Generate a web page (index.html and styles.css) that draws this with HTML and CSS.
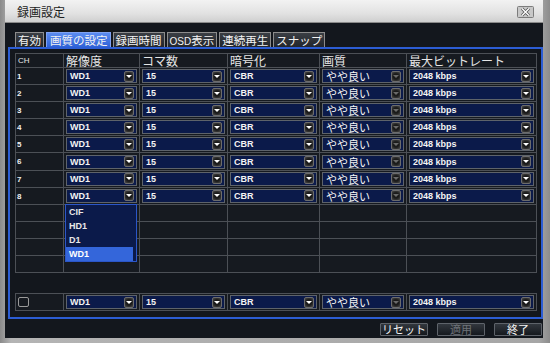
FILE: index.html
```html
<!DOCTYPE html>
<html lang="ja">
<head>
    <meta charset="UTF-8">
    <title>録画設定</title>
    <link rel="stylesheet" href="styles.css">
</head>
<body>
    <div class="window">
        <div class="titlebar">
            <span class="title">録画設定</span>
            <span class="close">
                <svg width="17" height="12" viewBox="0 0 17 12">
                    <rect x="0.5" y="0.5" width="16" height="11" rx="1" fill="#c8c8c8" stroke="#7c7c7c"/>
                    <path d="M5 2.5 L12 9.5 M12 2.5 L5 9.5" stroke="#555" stroke-width="3"/>
                    <path d="M5 2.5 L12 9.5 M12 2.5 L5 9.5" stroke="#fff" stroke-width="1.4"/>
                </svg>
            </span>
        </div>

        <div class="content">
            <div class="tabs">
                <div class="tab">有効</div>
                <div class="tab active">画質の設定</div>
                <div class="tab">録画時間</div>
                <div class="tab"><span class="latin">OSD</span>表示</div>
                <div class="tab">連続再生</div>
                <div class="tab">スナップ</div>
            </div>

            <div class="panel">
                <div class="grid">
                    <div class="row head">
                        <div class="cell"><span class="ch">CH</span></div>
                        <div class="cell">解像度</div>
                        <div class="cell">コマ数</div>
                        <div class="cell">暗号化</div>
                        <div class="cell">画質</div>
                        <div class="cell">最大ビットレート</div>
                    </div>

                    <div class="row">
                        <div class="cell num">1</div>
                        <div class="cell"><div class="sel"><span>WD1</span><i class="arr"></i></div></div>
                        <div class="cell"><div class="sel"><span>15</span><i class="arr"></i></div></div>
                        <div class="cell"><div class="sel"><span>CBR</span><i class="arr"></i></div></div>
                        <div class="cell"><div class="sel jp"><span>やや良い</span><i class="arr dim"></i></div></div>
                        <div class="cell"><div class="sel"><span>2048 kbps</span><i class="arr"></i></div></div>
                    </div>
                    <div class="row">
                        <div class="cell num">2</div>
                        <div class="cell"><div class="sel"><span>WD1</span><i class="arr"></i></div></div>
                        <div class="cell"><div class="sel"><span>15</span><i class="arr"></i></div></div>
                        <div class="cell"><div class="sel"><span>CBR</span><i class="arr"></i></div></div>
                        <div class="cell"><div class="sel jp"><span>やや良い</span><i class="arr dim"></i></div></div>
                        <div class="cell"><div class="sel"><span>2048 kbps</span><i class="arr"></i></div></div>
                    </div>
                    <div class="row">
                        <div class="cell num">3</div>
                        <div class="cell"><div class="sel"><span>WD1</span><i class="arr"></i></div></div>
                        <div class="cell"><div class="sel"><span>15</span><i class="arr"></i></div></div>
                        <div class="cell"><div class="sel"><span>CBR</span><i class="arr"></i></div></div>
                        <div class="cell"><div class="sel jp"><span>やや良い</span><i class="arr dim"></i></div></div>
                        <div class="cell"><div class="sel"><span>2048 kbps</span><i class="arr"></i></div></div>
                    </div>
                    <div class="row">
                        <div class="cell num">4</div>
                        <div class="cell"><div class="sel"><span>WD1</span><i class="arr"></i></div></div>
                        <div class="cell"><div class="sel"><span>15</span><i class="arr"></i></div></div>
                        <div class="cell"><div class="sel"><span>CBR</span><i class="arr"></i></div></div>
                        <div class="cell"><div class="sel jp"><span>やや良い</span><i class="arr dim"></i></div></div>
                        <div class="cell"><div class="sel"><span>2048 kbps</span><i class="arr"></i></div></div>
                    </div>
                    <div class="row">
                        <div class="cell num">5</div>
                        <div class="cell"><div class="sel"><span>WD1</span><i class="arr"></i></div></div>
                        <div class="cell"><div class="sel"><span>15</span><i class="arr"></i></div></div>
                        <div class="cell"><div class="sel"><span>CBR</span><i class="arr"></i></div></div>
                        <div class="cell"><div class="sel jp"><span>やや良い</span><i class="arr dim"></i></div></div>
                        <div class="cell"><div class="sel"><span>2048 kbps</span><i class="arr"></i></div></div>
                    </div>
                    <div class="row">
                        <div class="cell num">6</div>
                        <div class="cell"><div class="sel"><span>WD1</span><i class="arr"></i></div></div>
                        <div class="cell"><div class="sel"><span>15</span><i class="arr"></i></div></div>
                        <div class="cell"><div class="sel"><span>CBR</span><i class="arr"></i></div></div>
                        <div class="cell"><div class="sel jp"><span>やや良い</span><i class="arr dim"></i></div></div>
                        <div class="cell"><div class="sel"><span>2048 kbps</span><i class="arr"></i></div></div>
                    </div>
                    <div class="row">
                        <div class="cell num">7</div>
                        <div class="cell"><div class="sel"><span>WD1</span><i class="arr"></i></div></div>
                        <div class="cell"><div class="sel"><span>15</span><i class="arr"></i></div></div>
                        <div class="cell"><div class="sel"><span>CBR</span><i class="arr"></i></div></div>
                        <div class="cell"><div class="sel jp"><span>やや良い</span><i class="arr dim"></i></div></div>
                        <div class="cell"><div class="sel"><span>2048 kbps</span><i class="arr"></i></div></div>
                    </div>
                    <div class="row">
                        <div class="cell num">8</div>
                        <div class="cell"><div class="sel"><span>WD1</span><i class="arr"></i></div></div>
                        <div class="cell"><div class="sel"><span>15</span><i class="arr"></i></div></div>
                        <div class="cell"><div class="sel"><span>CBR</span><i class="arr"></i></div></div>
                        <div class="cell"><div class="sel jp"><span>やや良い</span><i class="arr dim"></i></div></div>
                        <div class="cell"><div class="sel"><span>2048 kbps</span><i class="arr"></i></div></div>
                    </div>

                    <div class="row empty">
                        <div class="cell"></div><div class="cell"></div><div class="cell"></div>
                        <div class="cell"></div><div class="cell"></div><div class="cell"></div>
                    </div>
                    <div class="row empty">
                        <div class="cell"></div><div class="cell"></div><div class="cell"></div>
                        <div class="cell"></div><div class="cell"></div><div class="cell"></div>
                    </div>
                    <div class="row empty">
                        <div class="cell"></div><div class="cell"></div><div class="cell"></div>
                        <div class="cell"></div><div class="cell"></div><div class="cell"></div>
                    </div>
                    <div class="row empty">
                        <div class="cell"></div><div class="cell"></div><div class="cell"></div>
                        <div class="cell"></div><div class="cell"></div><div class="cell"></div>
                    </div>
                </div>

                <!-- open dropdown of row 8 -->
                <div class="dropdown">
                    <div class="option">CIF</div>
                    <div class="option">HD1</div>
                    <div class="option">D1</div>
                    <div class="option selected">WD1</div>
                </div>

                <div class="grid all">
                    <div class="row">
                        <div class="cell"><span class="check"></span></div>
                        <div class="cell"><div class="sel"><span>WD1</span><i class="arr"></i></div></div>
                        <div class="cell"><div class="sel"><span>15</span><i class="arr"></i></div></div>
                        <div class="cell"><div class="sel"><span>CBR</span><i class="arr"></i></div></div>
                        <div class="cell"><div class="sel jp"><span>やや良い</span><i class="arr dim"></i></div></div>
                        <div class="cell"><div class="sel"><span>2048 kbps</span><i class="arr"></i></div></div>
                    </div>
                </div>
            </div>

            <div class="actions">
                <button class="btn">リセット</button>
                <button class="btn disabled">適用</button>
                <button class="btn">終了</button>
            </div>
        </div>
    </div>
</body>
</html>
```

FILE: styles.css
```css
body {
    margin: 0;
    background: #13171d;
    font-family: "Noto Sans CJK JP", "Liberation Sans", sans-serif;
}
.window {
    width: 550px;
    height: 343px;
    box-sizing: border-box;
    padding: 0 7px 5px 5px;
    background: linear-gradient(to right, #8a8a8a, #b4b4b4 2%, #a6a6a6 98%, #8c8c8c);
    display: flex;
    flex-direction: column;
}
.titlebar {
    height: 23px;
    flex-shrink: 0;
    display: flex;
    align-items: center;
    justify-content: space-between;
    padding: 0 9px 0 12px;
    background: linear-gradient(#f2f2f2, #e2e2e2 60%, #cfcfcf);
    border-bottom: 1px solid #8a8a8a;
    box-sizing: border-box;
}
.title {
    font-size: 12px;
    color: #1c1c1c;
    line-height: 1;
    padding-top: 2px;
}
.close {
    display: flex;
    margin-top: 1px;
}
.content {
    flex: 1;
    min-height: 0;
    background: #13171d;
    padding: 9px 0 0 3px;
    display: flex;
    flex-direction: column;
}
.tabs {
    display: flex;
    gap: 2px;
    margin-left: 7px;
    height: 15px;
}
.tab {
    font-size: 11.5px;
    line-height: 14px;
    color: #f2f2f2;
    padding: 0 2px;
    white-space: nowrap;
    background: linear-gradient(#3a3e44, #22262c);
    border: 1px solid #8c8c8c;
    border-bottom: none;
}
.tab.active {
    background: linear-gradient(#5b8cf0, #2f62d8);
    border-color: #7fa2f2;
    padding: 0 2px 0 3px;
}
.tab .latin {
    font-family: "Liberation Sans", sans-serif;
    font-size: 10px;
}
.panel {
    position: relative;
    border: 2px solid #2c5dd4;
    padding: 4px 4px 6px 5px;
}
.grid {
    border: 1px solid #4c5056;
    background: #161a20;
}
.grid.all {
    margin-top: 20px;
}
.row {
    display: grid;
    grid-template-columns: 47px 76px 88px 92px 87px 1fr;
    height: 17.1px;
    box-sizing: border-box;
    border-bottom: 1px solid #4c5056;
}
.row:last-child {
    border-bottom: none;
    height: 16.1px;
}
.grid.all .row {
    height: 16px;
}
.row.head {
    height: 14px;
}
.cell {
    border-left: 1px solid #4c5056;
    display: flex;
    align-items: center;
    padding: 0 1px;
    min-width: 0;
}
.cell:first-child {
    border-left: none;
}
.head .cell {
    font-size: 12px;
    line-height: 1;
    color: #e6e6e6;
    padding: 0 2px;
}
.head .ch {
    font-family: "Liberation Sans", sans-serif;
    font-size: 8px;
}
.cell.num {
    align-items: flex-start;
    padding: 4px 1px 0;
    font-family: "Liberation Sans", sans-serif;
    font-size: 8px;
    font-weight: bold;
    color: #f0f0f0;
}
.sel {
    flex: 1;
    height: 14px;
    box-sizing: border-box;
    margin: 0 1px;
    background: #0b1a4a;
    border: 1px solid #5e636a;
    display: flex;
    align-items: center;
    justify-content: space-between;
    padding: 0 2px 0 3px;
    font-family: "Liberation Sans", sans-serif;
    font-size: 9px;
    font-weight: bold;
    color: #f4f4f4;
}
.sel.jp {
    font-family: "Noto Sans CJK JP", sans-serif;
    font-size: 11px;
    font-weight: normal;
}
.arr {
    position: relative;
    width: 10px;
    height: 11px;
    box-sizing: border-box;
    border: 1px solid #6c6c6c;
    border-radius: 2px;
    background: radial-gradient(circle, #1a1a1a 45%, #3c3c3c 80%);
}
.arr::after {
    content: "";
    position: absolute;
    left: 1px;
    top: 3px;
    border-left: 3px solid transparent;
    border-right: 3px solid transparent;
    border-top: 3px solid #ffffff;
}
.arr.dim::after {
    border-top-color: #6a6a6a;
}
.check {
    width: 11px;
    height: 10px;
    box-sizing: border-box;
    margin-left: 1px;
    border: 1px solid #9a9a9a;
    border-radius: 2px;
}
.dropdown {
    position: absolute;
    left: 55px;
    top: 155px;
    width: 72px;
    height: 58px;
    box-sizing: border-box;
    background: #0b1a4a;
    border: 1px solid #2b56c8;
    padding: 0 3px 0 0;
}
.option {
    height: 14px;
    line-height: 14px;
    padding-left: 3px;
    font-family: "Liberation Sans", sans-serif;
    font-size: 9px;
    font-weight: bold;
    color: #e8e8e8;
}
.option.selected {
    background: #3466da;
    color: #ffffff;
}
.actions {
    display: flex;
    justify-content: flex-end;
    gap: 9px;
    margin-top: 4px;
    padding-right: 1px;
}
.btn {
    width: 48px;
    height: 13px;
    padding: 0;
    display: flex;
    align-items: center;
    justify-content: center;
    white-space: nowrap;
    overflow: visible;
    font-family: "Noto Sans CJK JP", sans-serif;
    font-size: 11px;
    line-height: 11px;
    color: #f4f4f4;
    background: linear-gradient(#32373e, #15191e);
    border: 1px solid #5e636a;
    border-radius: 1px;
}
.btn.disabled {
    color: #6e7278;
}
```
